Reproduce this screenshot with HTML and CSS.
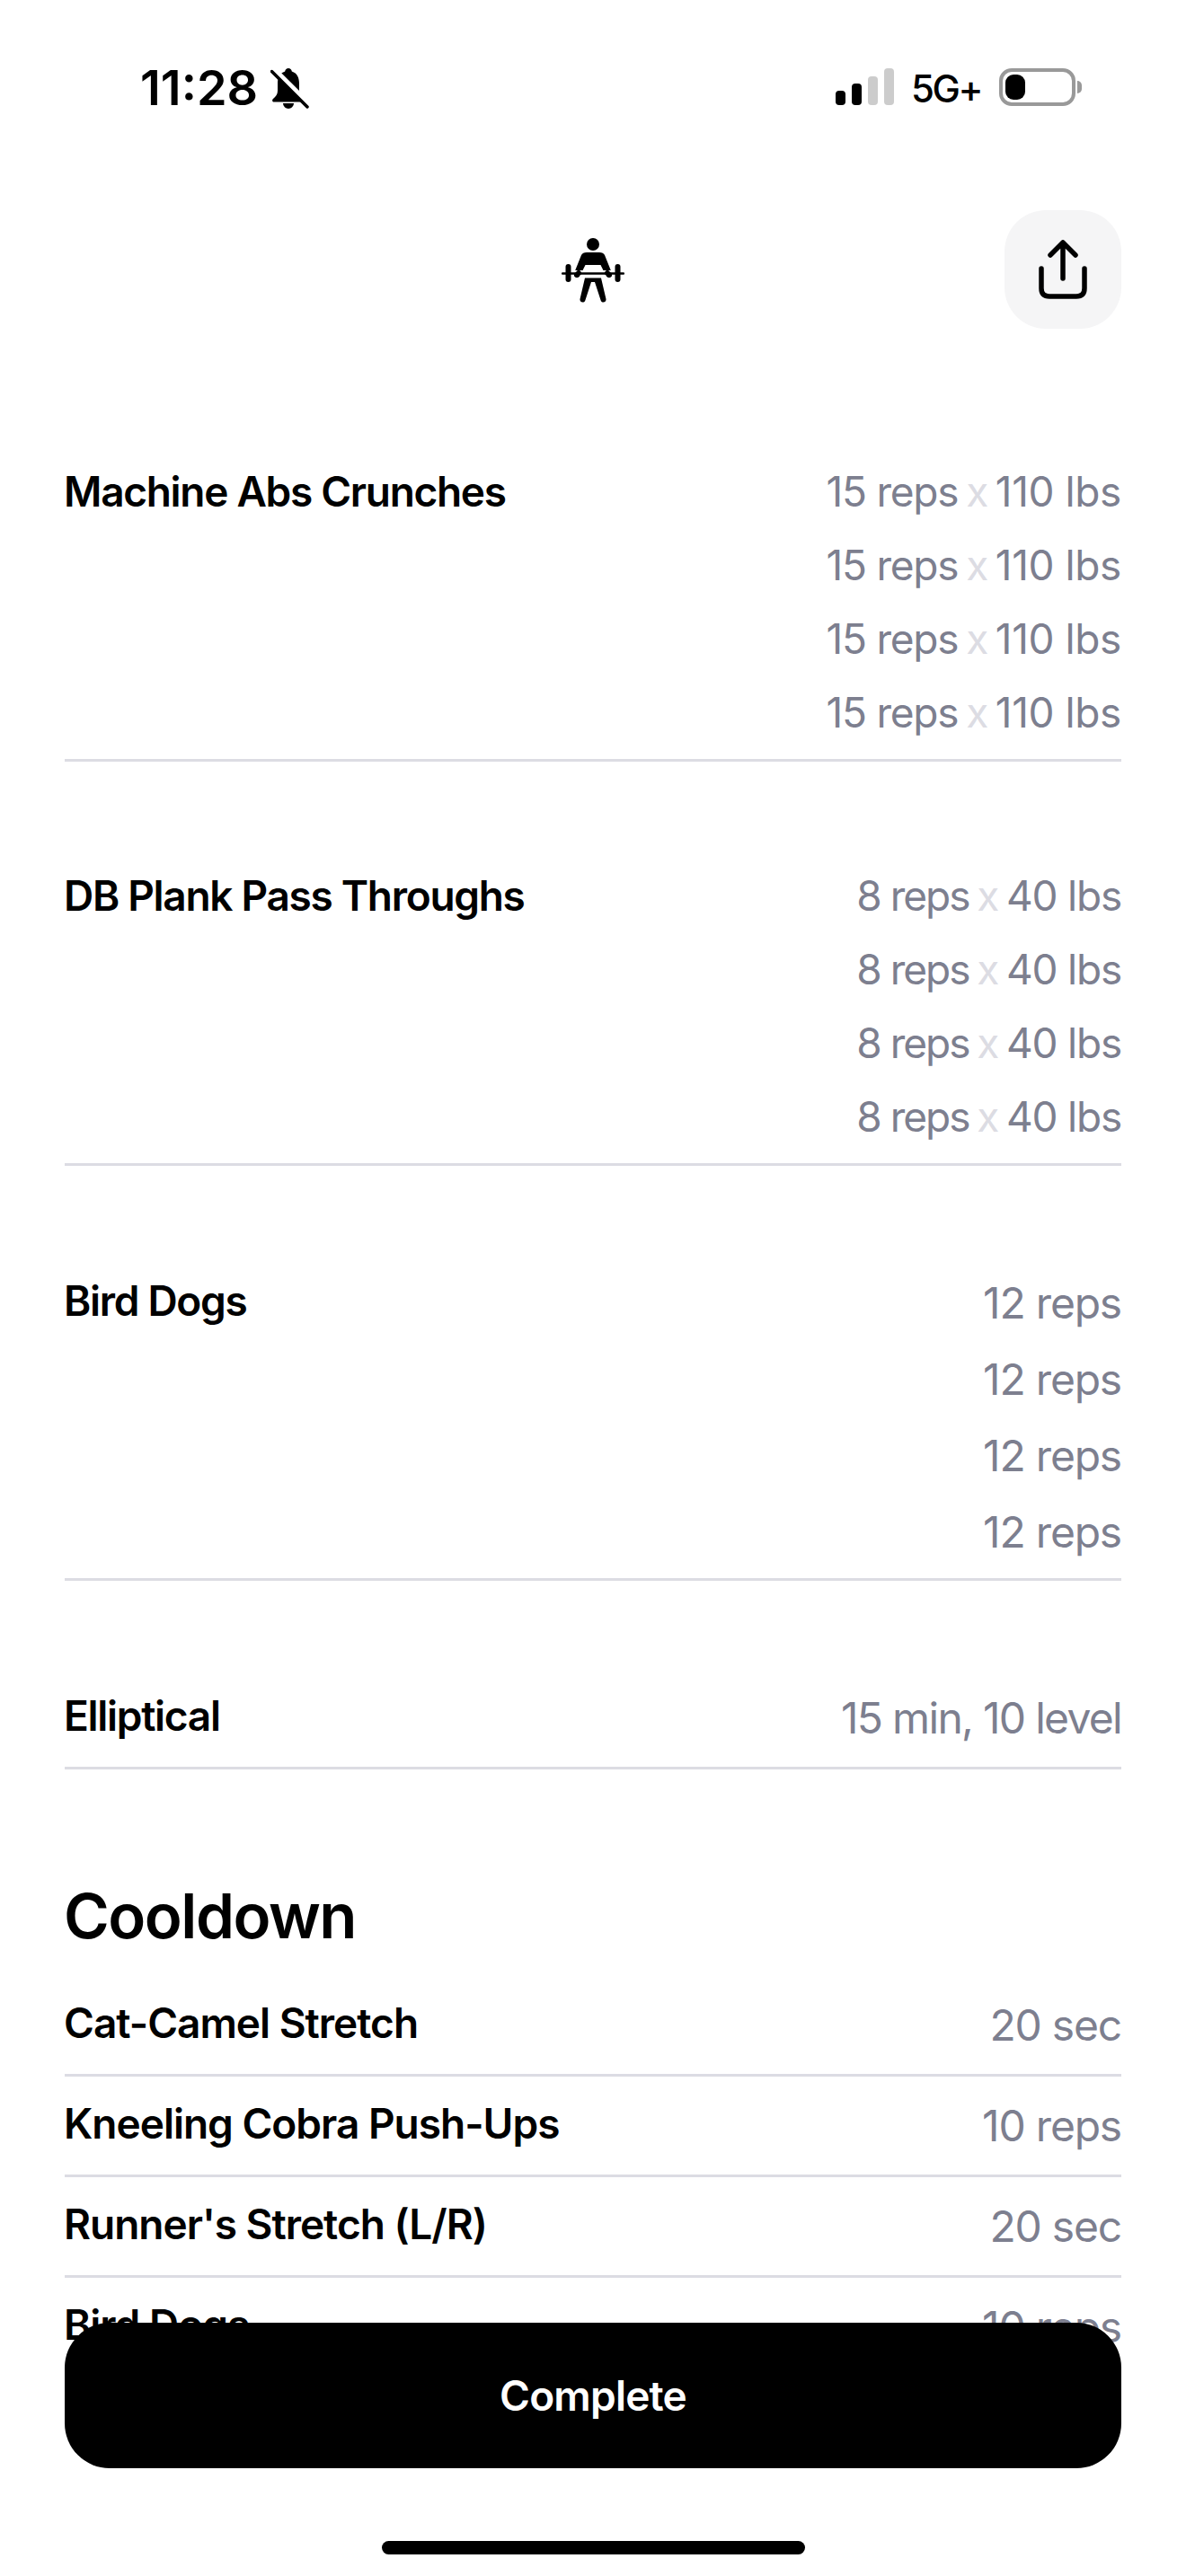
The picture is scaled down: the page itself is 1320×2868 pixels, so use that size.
FILE: index.html
```html
<!DOCTYPE html>
<html lang="en">
<head>
    <meta charset="UTF-8">
    <title>Workout</title>
    <link rel="stylesheet" href="styles.css">
</head>
<body>
    <div class="screen">
        <div class="status-bar">
            <div class="status-left">
                <span class="time">11:28</span>
                <svg class="bell" viewBox="0 0 44 45" width="44" height="45">
                    <path d="M20 0c-2 0-3.500 1.500-3.800 3.500C10 5.500 8 11 8 17v8c0 4-2 6-5 9-1.500 1.500-1 3.500 1 3.500h32c2 0 2.500-2 1-3.500-3-3-5-5-5-9v-8c0-6-2-11.500-8.200-13.500C23.500 1.500 22 0 20 0z" fill="#000"/>
                    <path d="M14 39h12c0 3-3 6-6 6s-6-3-6-6z" fill="#000"/>
                    <path d="M3 1l40 40" stroke="#fff" stroke-width="7"/>
                    <path d="M1.500 3.500l39.500 39.500" stroke="#000" stroke-width="3.500" stroke-linecap="round"/>
                </svg>
            </div>
            <div class="status-right">
                <div class="signal">
                    <span class="bar bar-1"></span>
                    <span class="bar bar-2"></span>
                    <span class="bar bar-3"></span>
                    <span class="bar bar-4"></span>
                </div>
                <span class="network">5G+</span>
                <div class="battery">
                    <div class="battery-level"></div>
                </div>
                <div class="battery-cap"></div>
            </div>
        </div>

        <div class="top-bar">
            <svg class="lifter" viewBox="0 0 70 73" width="70" height="73">
                <circle cx="35" cy="8" r="7" fill="#000"/>
                <path d="M28 17h14c3 0 5 1 6 3l8 20c1 2.500-1 5-3 5s-3-1-4-3l-5.500-11h-17L21 42c-1 2-2 3-4 3s-4-2.500-3-5l8-20c1-2 3-3 6-3z" fill="#000"/>
                <path d="M1 40h68" stroke="#fff" stroke-width="6"/>
                <path d="M1 40.500h68" stroke="#000" stroke-width="2.500" stroke-linecap="round"/>
                <path d="M17 42l2-2M53 42l-2-2" stroke="#000" stroke-width="6" stroke-linecap="round"/>
                <rect x="4.500" y="30" width="6" height="20" rx="3" fill="#000"/>
                <rect x="59.500" y="30" width="6" height="20" rx="3" fill="#000"/>
                <path d="M26 45.500h18l5.500 23.500c.5 4-5 5-6 1L37 50h-4l-6.500 20c-1 4-6.500 3-6-1z" fill="#000"/>
            </svg>
            <button class="share-btn">
                <svg viewBox="0 0 54 66" width="54" height="66" fill="none" stroke="#000" stroke-width="5.500" stroke-linecap="round" stroke-linejoin="round">
                    <path d="M27 43V3M13 17L27 3l14 14"/>
                    <path d="M3 32v22c0 6 3 9 9 9h30c6 0 9-3 9-9V32"/>
                </svg>
            </button>
        </div>

        <div class="list">
            <div class="exercise">
                <div class="name">Machine Abs Crunches</div>
                <div class="sets">
                    <div class="set">15 reps <span class="times">x</span> <span class="load-wide">110 lbs</span></div>
                    <div class="set">15 reps <span class="times">x</span> <span class="load-wide">110 lbs</span></div>
                    <div class="set">15 reps <span class="times">x</span> <span class="load-wide">110 lbs</span></div>
                    <div class="set">15 reps <span class="times">x</span> <span class="load-wide">110 lbs</span></div>
                </div>
            </div>
            <div class="exercise">
                <div class="name">DB Plank Pass Throughs</div>
                <div class="sets">
                    <div class="set"><span class="tight">8 reps</span> <span class="times">x</span> 40 lbs</div>
                    <div class="set"><span class="tight">8 reps</span> <span class="times">x</span> 40 lbs</div>
                    <div class="set"><span class="tight">8 reps</span> <span class="times">x</span> 40 lbs</div>
                    <div class="set"><span class="tight">8 reps</span> <span class="times">x</span> 40 lbs</div>
                </div>
            </div>
            <div class="exercise large">
                <div class="name">Bird Dogs</div>
                <div class="sets">
                    <div class="set">12 reps</div>
                    <div class="set">12 reps</div>
                    <div class="set">12 reps</div>
                    <div class="set">12 reps</div>
                </div>
            </div>
            <div class="exercise large single">
                <div class="name">Elliptical</div>
                <div class="sets">
                    <div class="set tight-line">15 min, 10 level</div>
                </div>
            </div>

            <h2 class="section-title">Cooldown</h2>
            <div class="exercise large compact">
                <div class="name">Cat-Camel Stretch</div>
                <div class="sets"><div class="set">20 sec</div></div>
            </div>
            <div class="exercise large compact">
                <div class="name">Kneeling Cobra Push-Ups</div>
                <div class="sets"><div class="set">10 reps</div></div>
            </div>
            <div class="exercise large compact">
                <div class="name">Runner's Stretch (L/R)</div>
                <div class="sets"><div class="set">20 sec</div></div>
            </div>
            <div class="exercise large compact">
                <div class="name">Bird Dogs</div>
                <div class="sets"><div class="set">10 reps</div></div>
            </div>
        </div>

        <button class="complete-btn">Complete</button>
        <div class="home-indicator"></div>
    </div>
</body>
</html>
```

FILE: styles.css
```css
body {
    margin: 0;
    padding: 0;
    background: #fff;
    font-family: Inter, "Liberation Sans", sans-serif;
    color: #000;
}
.screen {
    position: relative;
    width: 1320px;
    height: 2868px;
    overflow: hidden;
}
.status-bar {
    display: flex;
    justify-content: space-between;
    align-items: center;
    height: 60px;
    padding: 68px 116px 0 156px;
}
.status-left {
    display: flex;
    align-items: center;
    gap: 14px;
}
.time {
    font-size: 54px;
    font-weight: 600;
    line-height: 60px;
}
.status-right {
    display: flex;
    align-items: center;
}
.signal {
    display: flex;
    align-items: flex-end;
    gap: 7px;
    height: 41px;
    margin: 0 19px 3px 0;
}
.bar {
    width: 11px;
    border-radius: 4px;
    background: #000;
}
.bar-1 { height: 16px; }
.bar-2 { height: 24px; }
.bar-3 { height: 32px; background: #ccc; }
.bar-4 { height: 41px; background: #ccc; }
.network {
    font-size: 42px;
    font-weight: 500;
    letter-spacing: -2.500px;
    margin-right: 20px;
}
.battery {
    box-sizing: border-box;
    width: 85px;
    height: 42px;
    border: 4px solid #999;
    border-radius: 14px;
    padding: 3px;
    margin-bottom: 3px;
}
.battery-level {
    width: 22px;
    height: 28px;
    background: #000;
    border-radius: 9px;
}
.battery-cap {
    width: 5px;
    height: 14px;
    margin: 0 0 3px 2px;
    background: #999;
    border-radius: 0 5px 5px 0;
}
.top-bar {
    position: relative;
    display: flex;
    justify-content: center;
    align-items: center;
    height: 132px;
    margin-top: 106px;
}
.share-btn {
    position: absolute;
    right: 72px;
    top: 0;
    width: 130px;
    height: 132px;
    border: none;
    border-radius: 46px;
    background: #f5f5f6;
    padding: 0;
    display: flex;
    justify-content: center;
    align-items: center;
}
.list {
    padding: 0 72px;
    margin-top: 140px;
}
.exercise {
    display: flex;
    justify-content: space-between;
    align-items: flex-start;
    border-bottom: 3px solid #dcdce3;
    margin-bottom: 108px;
    padding-bottom: 11px;
}
.name {
    font-size: 46px;
    font-weight: 600;
    line-height: 82px;
    letter-spacing: -1.300px;
    margin-left: -1px;
}
.set {
    font-size: 46px;
    line-height: 82px;
    color: #7d7f8f;
    text-align: right;
    letter-spacing: -1.200px;
}
.times {
    color: #dcdce3;
    margin: 0 -3px;
}
.load-wide {
    letter-spacing: -0.400px;
}
.tight {
    letter-spacing: -2px;
}
.large .name {
    line-height: 85px;
}
.large .sets {
    margin-top: 2px;
}
.large .set {
    font-size: 48px;
    line-height: 85px;
}
.large {
    padding-bottom: 9px;
}
.large .tight-line {
    letter-spacing: -1.700px;
}
.single {
    padding-bottom: 12px;
}
.section-title {
    font-size: 69px;
    font-weight: 600;
    line-height: 84px;
    letter-spacing: -1.500px;
    margin: 121px 0 25px -1px;
}
.compact {
    margin-bottom: 0;
    padding: 10px 0 12px;
}
.compact .name {
    letter-spacing: -1px;
}
.complete-btn {
    position: absolute;
    left: 72px;
    top: 2586px;
    width: 1176px;
    height: 162px;
    border: none;
    border-radius: 50px;
    background: #000;
    color: #fff;
    font-family: inherit;
    font-size: 46px;
    font-weight: 600;
    letter-spacing: -0.800px;
}
.home-indicator {
    position: absolute;
    left: 425px;
    top: 2829px;
    width: 471px;
    height: 15px;
    border-radius: 8px;
    background: #000;
}
```
